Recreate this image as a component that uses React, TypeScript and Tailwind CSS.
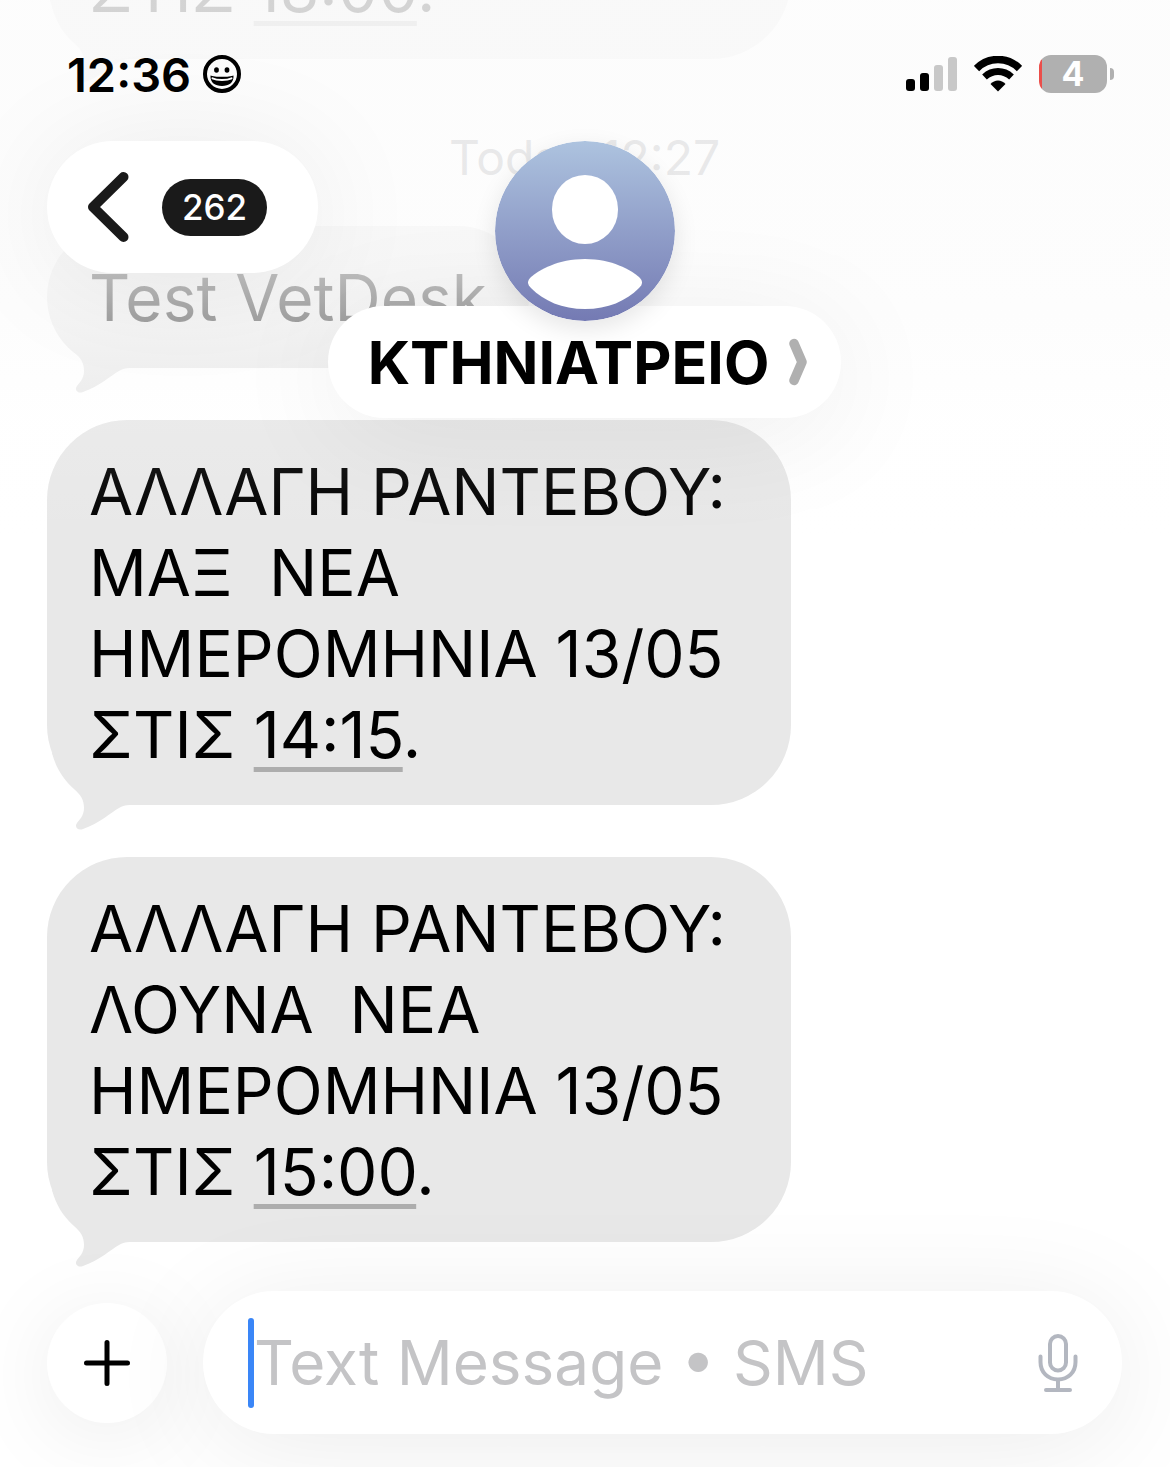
import type { ReactNode } from 'react'

interface Message {
  id: number
  text: string
  time?: string
}

const earlier: Message[] = [
  { id: 1, text: 'ΑΛΛΑΓΗ ΡΑΝΤΕΒΟΥ: ΜΑΞ  ΝΕΑ ΗΜΕΡΟΜΗΝΙΑ 12/05 ΣΤΙΣ ', time: '18:00' },
]

const today: Message[] = [
  { id: 2, text: 'Test VetDesk' },
  { id: 3, text: 'ΑΛΛΑΓΗ ΡΑΝΤΕΒΟΥ: ΜΑΞ  ΝΕΑ ΗΜΕΡΟΜΗΝΙΑ 13/05 ΣΤΙΣ ', time: '14:15' },
  { id: 4, text: 'ΑΛΛΑΓΗ ΡΑΝΤΕΒΟΥ: ΛΟΥΝΑ  ΝΕΑ ΗΜΕΡΟΜΗΝΙΑ 13/05 ΣΤΙΣ ', time: '15:00' },
]

function Bubble({ message }: { message: Message }) {
  return (
    <li className="relative w-fit max-w-[744px] rounded-[80px] bg-[#e8e8e8] px-[42px] pt-[31px] pb-[30px]">
      <svg
        className="absolute -bottom-7 left-0 h-26 w-25 text-[#e8e8e8]"
        viewBox="0 0 100 104"
        fill="currentColor"
        aria-hidden="true"
      >
        <path d="M5 24C9 39 16 50 27 60C34 66 37 71 37 79C37 87 32 91 30 94C27 98 31 102 36 100C51 95 65 83 72 79C76 76.500 79 76 88 76V24Z" />
      </svg>
      <p className="relative text-[64px] leading-[81px] whitespace-pre-wrap text-black">
        {message.text}
        {message.time && (
          <>
            <a
              href="#"
              className="underline decoration-[#adadad] decoration-[5px] underline-offset-[9px] [text-decoration-skip-ink:none]"
            >
              {message.time}
            </a>
            .
          </>
        )}
      </p>
    </li>
  )
}

function SmileyIcon() {
  return (
    <svg className="size-[38px]" viewBox="0 0 38 38" fill="none" aria-hidden="true">
      <circle cx="19" cy="19" r="17" stroke="black" strokeWidth="4" />
      <ellipse cx="13.500" cy="15" rx="2.400" ry="2.700" fill="black" />
      <ellipse cx="24" cy="15" rx="2.400" ry="2.700" fill="black" />
      <path
        d="M7.500 20.500C11 22.300 27 22.300 30.500 20.500C31 27.500 26 31 19 31S7 27.500 7.500 20.500Z"
        fill="black"
      />
      <path
        d="M9.500 23.300C14 25.500 24 25.500 28.500 23.300"
        stroke="white"
        strokeWidth="2"
        strokeLinecap="round"
      />
    </svg>
  )
}

function SignalIcon() {
  return (
    <svg className="h-[34px] w-[51px]" viewBox="0 0 51 34" role="img" aria-label="Signal">
      <rect x="0" y="22" width="9" height="12" rx="3" />
      <rect x="14" y="16" width="9" height="18" rx="3" />
      <rect x="28" y="8" width="9" height="26" rx="3" fill="#c8c8c8" />
      <rect x="42" y="0" width="9" height="34" rx="3" fill="#c8c8c8" />
    </svg>
  )
}

function WifiIcon() {
  return (
    <svg className="h-9 w-12" viewBox="0 0 48 36" fill="none" role="img" aria-label="Wi-Fi">
      <path d="M2.500 12.500C14.500 0.500 33.500 0.500 45.500 12.500" stroke="black" strokeWidth="7.500" />
      <path d="M10.500 21C18.500 13.800 29.500 13.800 37.500 21" stroke="black" strokeWidth="7" />
      <path d="M16.500 28C20.500 23.300 27.500 23.300 31.500 28L24 35.500Z" fill="black" />
    </svg>
  )
}

function StatusBar() {
  return (
    <div className="flex h-[148px] items-center justify-between pr-2 pl-5">
      <div className="flex items-center gap-3">
        <time className="text-[47px] leading-none font-semibold">12:36</time>
        <SmileyIcon />
      </div>
      <div className="flex items-center gap-[17px]">
        <SignalIcon />
        <WifiIcon />
        <div className="flex items-center gap-[3px]">
          <div className="flex h-[38px] w-17 items-center justify-center rounded-xl bg-[linear-gradient(to_right,#eb4e4a_3px,#b0b0b0_3px)] text-[34px] leading-none font-bold text-white">
            4
          </div>
          <span className="h-3 w-1 rounded-r-full bg-[#b0b0b0]" />
        </div>
      </div>
    </div>
  )
}

function Avatar() {
  return (
    <svg
      className="relative z-10 size-45 rounded-full shadow-[0_8px_24px_rgba(0,0,0,0.1)]"
      viewBox="0 0 180 180"
      aria-hidden="true"
    >
      <defs>
        <linearGradient id="avatar" x1="0" y1="0" x2="0" y2="1">
          <stop offset="0" stopColor="#adc3df" />
          <stop offset="1" stopColor="#747ab3" />
        </linearGradient>
      </defs>
      <circle cx="90" cy="90" r="90" fill="url(#avatar)" />
      <rect x="57" y="34" width="66" height="69" rx="33" ry="34" fill="white" />
      <path
        d="M90 118C117 118 136 129 144 136C148 140 148 143 144 147C131 160 113 168 90 168S49 160 36 147C32 143 32 140 36 136C44 129 63 118 90 118Z"
        fill="white"
      />
    </svg>
  )
}

function Header({ children }: { children: ReactNode }) {
  return (
    <header className="absolute inset-x-0 top-0 pr-12 pl-[47px]">
      {children}
      <div className="-mt-[7px] grid grid-cols-[1fr_auto_1fr] items-start">
        <button
          type="button"
          aria-label="Back, 262 unread"
          className="flex h-33 items-center gap-[33px] justify-self-start rounded-full bg-white pr-[51px] pl-10 shadow-[0_8px_120px_rgba(0,0,0,0.08)]"
        >
          <svg className="h-[70px] w-[42px]" viewBox="0 0 42 70" fill="none" aria-hidden="true">
            <path
              d="M36.500 5L6 35L36.500 65"
              stroke="#1a1a1a"
              strokeWidth="10"
              strokeLinecap="round"
              strokeLinejoin="round"
            />
          </svg>
          <span className="flex h-[57px] w-[105px] items-center justify-center rounded-full bg-[#1a1a1a] text-[35px] leading-none font-medium text-white">
            262
          </span>
        </button>
        <div className="flex flex-col items-center">
          <Avatar />
          <button
            type="button"
            className="-mt-[15px] flex h-28 items-center gap-5 rounded-full bg-white pr-[34px] pl-10 shadow-[0_16px_120px_rgba(0,0,0,0.07)]"
          >
            <span className="text-[59px] leading-none font-bold text-black">ΚΤΗΝΙΑΤΡΕΙΟ</span>
            <svg className="h-12 w-[18px]" viewBox="0 0 18 48" fill="none" aria-hidden="true">
              <path
                d="M5 5.500L13 24L5 42.500"
                stroke="#b0b0b0"
                strokeWidth="9.500"
                strokeLinecap="round"
                strokeLinejoin="round"
              />
            </svg>
          </button>
        </div>
      </div>
    </header>
  )
}

function Composer() {
  return (
    <form
      className="absolute inset-x-0 bottom-0 flex items-center gap-9 pr-12 pb-[33px] pl-[47px]"
      onSubmit={e => e.preventDefault()}
    >
      <button
        type="button"
        aria-label="Add attachment"
        className="flex size-30 shrink-0 items-center justify-center rounded-full bg-white shadow-[0_12px_90px_rgba(0,0,0,0.08)]"
      >
        <svg className="size-[46px]" viewBox="0 0 46 46" fill="none" aria-hidden="true">
          <path d="M23 2.500V43.500M2.500 23H43.500" stroke="black" strokeWidth="5" strokeLinecap="round" />
        </svg>
      </button>
      <div className="flex h-[143px] min-w-0 flex-1 items-center rounded-full bg-white pr-[42px] pl-[45px] shadow-[0_12px_110px_rgba(0,0,0,0.08)]">
        <span className="h-[90px] w-1.5 shrink-0 rounded-full bg-[#3a86f7]" />
        <input
          type="text"
          aria-label="Message"
          placeholder="Text Message • SMS"
          className="h-25 min-w-0 flex-1 text-[62px] text-black outline-none placeholder:text-[#c4c4c6]"
        />
        <button type="button" aria-label="Dictate">
          <svg
            className="h-[58px] w-11"
            viewBox="0 0 44 58"
            fill="none"
            stroke="#b3b7c0"
            strokeWidth="4"
            strokeLinecap="round"
            aria-hidden="true"
          >
            <rect x="14" y="2" width="16" height="34.500" rx="8" />
            <path d="M4.500 22.500V28C4.500 38.500 12 45.500 22 45.500S39.500 38.500 39.500 28V22.500" />
            <path d="M22 46V55M10 56H34" />
          </svg>
        </button>
      </div>
    </form>
  )
}

export default function App() {
  return (
    <main className="relative flex h-screen flex-col justify-end overflow-hidden bg-white font-[Inter,sans-serif]">
      <section className="pr-12 pb-[225px] pl-[47px]">
        <ul>
          {earlier.map(m => (
            <Bubble key={m.id} message={m} />
          ))}
        </ul>
        <p className="pt-[82px] pb-[52px] text-center text-[48px] leading-[33px] text-[#8e8e93]">
          Today 12:27
        </p>
        <ul className="flex flex-col gap-[52px]">
          {today.map(m => (
            <Bubble key={m.id} message={m} />
          ))}
        </ul>
      </section>
      <div className="pointer-events-none absolute inset-x-0 top-0 h-[540px] bg-[linear-gradient(to_bottom,rgba(252,252,252,0.84)_0%,rgba(252,252,252,0.82)_35%,rgba(252,252,252,0.76)_50%,rgba(252,252,252,0.63)_60%,rgba(252,252,252,0.12)_78%,rgba(252,252,252,0)_100%)]" />
      <Header>
        <StatusBar />
      </Header>
      <Composer />
    </main>
  )
}
